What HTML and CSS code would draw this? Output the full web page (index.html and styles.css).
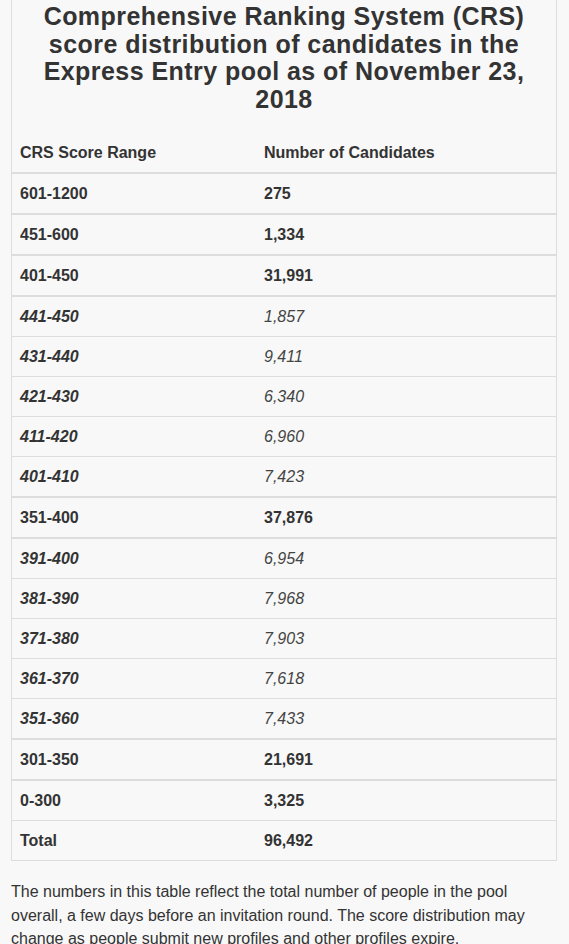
FILE: index.html
```html
<!DOCTYPE html>
<html lang="en">
<head>
<meta charset="utf-8">
<title>CRS score distribution</title>
<link rel="stylesheet" href="styles.css">
</head>
<body>
<div class="box">
  <h2 class="title">Comprehensive Ranking System (CRS) score distribution of candidates in the Express Entry pool as of November 23, 2018</h2>
  <table class="crs">
    <thead>
      <tr><th class="c1">CRS Score Range</th><th>Number of Candidates</th></tr>
    </thead>
    <tbody>
      <tr><td class="c1 b">601-1200</td><td class="b">275</td></tr>
    </tbody>
    <tbody>
      <tr><td class="c1 b">451-600</td><td class="b">1,334</td></tr>
    </tbody>
    <tbody>
      <tr><td class="c1 b">401-450</td><td class="b">31,991</td></tr>
      <tr class="sub"><td class="c1">441-450</td><td>1,857</td></tr>
      <tr class="sub"><td class="c1">431-440</td><td>9,411</td></tr>
      <tr class="sub"><td class="c1">421-430</td><td>6,340</td></tr>
      <tr class="sub"><td class="c1">411-420</td><td>6,960</td></tr>
      <tr class="sub"><td class="c1">401-410</td><td>7,423</td></tr>
    </tbody>
    <tbody>
      <tr><td class="c1 b">351-400</td><td class="b">37,876</td></tr>
      <tr class="sub"><td class="c1">391-400</td><td>6,954</td></tr>
      <tr class="sub"><td class="c1">381-390</td><td>7,968</td></tr>
      <tr class="sub"><td class="c1">371-380</td><td>7,903</td></tr>
      <tr class="sub"><td class="c1">361-370</td><td>7,618</td></tr>
      <tr class="sub"><td class="c1">351-360</td><td>7,433</td></tr>
    </tbody>
    <tbody>
      <tr><td class="c1 b">301-350</td><td class="b">21,691</td></tr>
    </tbody>
    <tbody>
      <tr><td class="c1 b">0-300</td><td class="b">3,325</td></tr>
      <tr><td class="c1 b">Total</td><td class="b">96,492</td></tr>
    </tbody>
  </table>
</div>
<p class="note">The numbers in this table reflect the total number of people in the pool overall, a few days before an invitation round. The score distribution may change as people submit new profiles and other profiles expire.</p>
</body>
</html>
```

FILE: styles.css
```css
html, body {
  margin: 0;
  padding: 0;
  background: #f8f8f8;
}
body {
  font-family: "Liberation Sans", Arial, sans-serif;
  color: #333;
  font-size: 16px;
  padding: 0 12px 0 11px;
}
.box {
  border: 1px solid #ddd;
  border-top: none;
}
.title {
  margin: 0 0 20px;
  padding: 3px 4px 0;
  font-size: 25px;
  line-height: 27.5px;
  letter-spacing: 0.45px;
  font-weight: bold;
  text-align: center;
  color: #333;
}
.crs {
  width: 100%;
  border-collapse: separate;
  border-spacing: 0;
}
.crs th, .crs td {
  padding: 8px;
  height: 23px;
  line-height: 23px;
  text-align: left;
  vertical-align: top;
  font-size: 16px;
}
.crs th {
  font-weight: bold;
  border-bottom: 2px solid #ddd;
}
.crs td {
  border-top: 1px solid #ddd;
}
.crs tbody:first-of-type tr:first-child td {
  border-top: 0;
}
.crs tbody + tbody tr:first-child td,
.crs tr:not(.sub) + tr.sub td {
  border-top: 2px solid #ddd;
}
.crs .c1 {
  width: 228px;
}
.crs .b {
  font-weight: bold;
}
.crs .sub td {
  font-style: italic;
  color: #444;
}
.crs .sub td.c1 {
  font-weight: bold;
  color: #333;
}
.note {
  margin: 19px 0 0;
  font-size: 16px;
  line-height: 23.5px;
  color: #333;
}
```
